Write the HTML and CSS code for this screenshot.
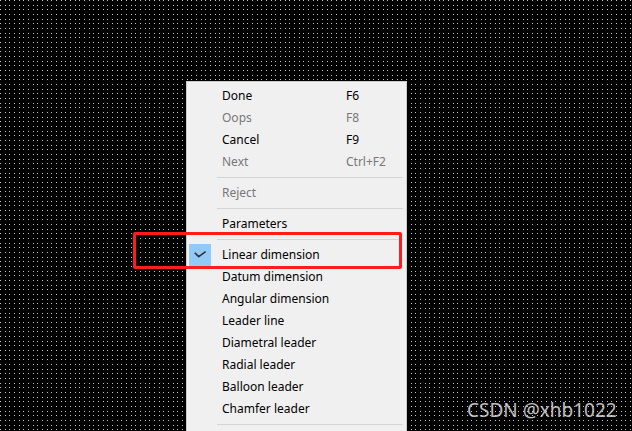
FILE: index.html
```html
<!DOCTYPE html>
<html>
<head>
<meta charset="utf-8">
<link rel="stylesheet" href="styles.css">
</head>
<body>
<div class="canvas">
  <div class="menu">
    <div class="item"><span class="check"></span><span class="label">Done</span><span class="key">F6</span></div>
    <div class="item disabled"><span class="check"></span><span class="label">Oops</span><span class="key">F8</span></div>
    <div class="item"><span class="check"></span><span class="label">Cancel</span><span class="key">F9</span></div>
    <div class="item disabled"><span class="check"></span><span class="label">Next</span><span class="key">Ctrl+F2</span></div>
    <div class="sep"></div>
    <div class="item disabled"><span class="check"></span><span class="label">Reject</span></div>
    <div class="sep"></div>
    <div class="item"><span class="check"></span><span class="label">Parameters</span></div>
    <div class="sep"></div>
    <div class="item"><span class="check checked"><svg width="22" height="22" viewBox="0 0 22 22"><polyline points="6.3,9.3 9.7,12.6 16,8" fill="none" stroke="#333" stroke-width="1.6" stroke-linecap="square"/></svg></span><span class="label">Linear dimension</span></div>
    <div class="item"><span class="check"></span><span class="label">Datum dimension</span></div>
    <div class="item"><span class="check"></span><span class="label">Angular dimension</span></div>
    <div class="item"><span class="check"></span><span class="label">Leader line</span></div>
    <div class="item"><span class="check"></span><span class="label">Diametral leader</span></div>
    <div class="item"><span class="check"></span><span class="label">Radial leader</span></div>
    <div class="item"><span class="check"></span><span class="label">Balloon leader</span></div>
    <div class="item"><span class="check"></span><span class="label">Chamfer leader</span></div>
    <div class="sep"></div>
  </div>
  <div class="highlight"></div>
  <div class="watermark">CSDN @xhb1022</div>
</div>
</body>
</html>
```

FILE: styles.css
```css
html, body {
  margin: 0;
  padding: 0;
  width: 632px;
  height: 431px;
  overflow: hidden;
  background: #000;
}

.canvas {
  position: relative;
  width: 632px;
  height: 431px;
  overflow: hidden;
  background-color: #000;
  background-image:
    conic-gradient(at 1px 1px, transparent 75%, #c4c4c4 0),
    conic-gradient(at 1px 1px, transparent 75%, #c4c4c4 0),
    conic-gradient(at 1px 1px, transparent 75%, #c4c4c4 0),
    conic-gradient(at 1px 1px, transparent 75%, #c4c4c4 0),
    conic-gradient(at 1px 1px, transparent 75%, #c4c4c4 0),
    conic-gradient(at 1px 1px, transparent 75%, #c4c4c4 0),
    conic-gradient(at 1px 1px, transparent 75%, #c4c4c4 0),
    conic-gradient(at 1px 1px, transparent 75%, #c4c4c4 0),
    conic-gradient(at 1px 1px, transparent 75%, #c4c4c4 0);
  background-size: 14px 14px;
  background-position:
    0 0, 5px 0, 9px 0,
    0 5px, 5px 5px, 9px 5px,
    0 9px, 5px 9px, 9px 9px;
  font-family: "Noto Sans", "Liberation Sans", sans-serif;
}

.menu {
  position: absolute;
  left: 186px;
  top: 81px;
  width: 219px;
  height: 400px;
  padding-top: 3px;
  background: #f0f0f0;
  border: 1px solid #cbcbcb;
  display: flex;
  flex-direction: column;
}

.item {
  display: flex;
  align-items: center;
  height: 22px;
  padding-left: 2px;
  font-size: 12px;
  line-height: 22px;
  color: #000;
  white-space: nowrap;
}

.item.disabled {
  color: #787878;
}

.check {
  flex: 0 0 22px;
  width: 22px;
  height: 22px;
}

.check.checked {
  background: #91c9f7;
}

.check svg {
  display: block;
}

.label {
  margin-left: 11px;
  width: 124px;
}

.key {
  flex: 1;
}

.sep {
  height: 9px;
  display: flex;
  align-items: center;
  padding-left: 30px;
  padding-right: 3px;
}

.sep::before {
  content: "";
  display: block;
  width: 186px;
  height: 1px;
  background: #d5d5d5;
}

.highlight {
  position: absolute;
  left: 133px;
  top: 232px;
  width: 263px;
  height: 31px;
  border: 3px solid #ff1c1c;
  border-radius: 2px;
}

.watermark {
  position: absolute;
  left: 467px;
  top: 398px;
  font-size: 19px;
  line-height: 24px;
  color: rgba(235, 235, 235, 0.82);
  white-space: nowrap;
}
```
